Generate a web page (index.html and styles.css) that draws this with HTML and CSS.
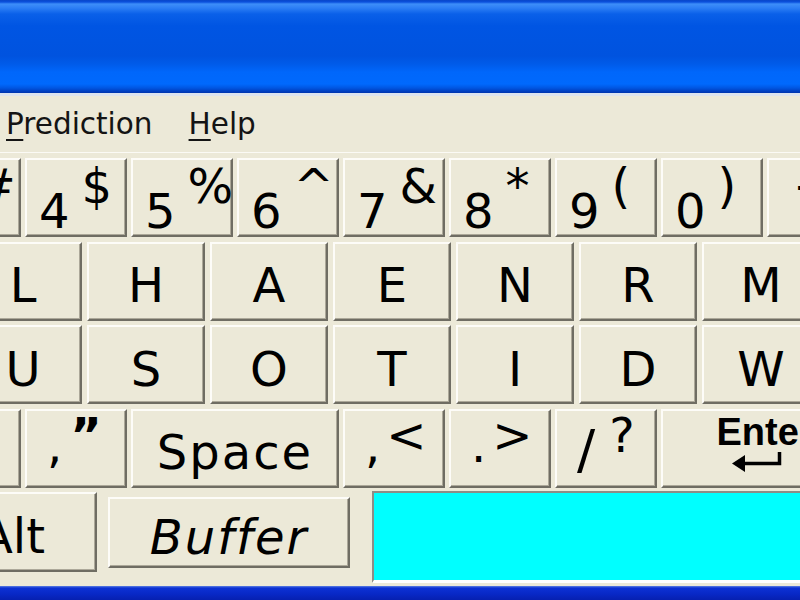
FILE: index.html
```html
<!DOCTYPE html>
<html lang="en">
<head>
  <meta charset="UTF-8">
  <title>On-Screen Keyboard</title>
  <link rel="stylesheet" href="styles.css">
</head>
<body>

<div class="window">
  <div class="titlebar"></div>

  <div class="menubar">
    <span><u>P</u>rediction</span>
    <span><u>H</u>elp</span>
  </div>

  <div class="keyboard">
    <!-- Number row -->
    <div class="row row-num">
      <div class="key pair"><span class="lo">3</span><span class="hi">#</span></div>
      <div class="key pair"><span class="lo">4</span><span class="hi">$</span></div>
      <div class="key pair"><span class="lo">5</span><span class="hi">%</span></div>
      <div class="key pair"><span class="lo">6</span><span class="hi">^</span></div>
      <div class="key pair"><span class="lo">7</span><span class="hi">&amp;</span></div>
      <div class="key pair"><span class="lo">8</span><span class="hi">*</span></div>
      <div class="key pair"><span class="lo">9</span><span class="hi">(</span></div>
      <div class="key pair"><span class="lo">0</span><span class="hi">)</span></div>
      <div class="key pair"><span class="hi">+</span></div>
    </div>

    <!-- Letter rows -->
    <div class="row row-letters">
      <div class="key letter">L</div>
      <div class="key letter">H</div>
      <div class="key letter">A</div>
      <div class="key letter">E</div>
      <div class="key letter">N</div>
      <div class="key letter">R</div>
      <div class="key letter">M</div>
    </div>
    <div class="row row-letters">
      <div class="key letter">U</div>
      <div class="key letter">S</div>
      <div class="key letter">O</div>
      <div class="key letter">T</div>
      <div class="key letter">I</div>
      <div class="key letter">D</div>
      <div class="key letter">W</div>
    </div>

    <!-- Punctuation row -->
    <div class="row row-punct">
      <div class="key"></div>
      <div class="key pair"><span class="lo">,</span><span class="hi quote">”</span></div>
      <div class="key letter wide space">Space</div>
      <div class="key pair"><span class="lo">,</span><span class="hi">&lt;</span></div>
      <div class="key pair"><span class="lo">.</span><span class="hi">&gt;</span></div>
      <div class="key pair"><span class="lo slash">/</span><span class="hi question">?</span></div>
      <div class="key wide enter">
        <span class="enter-label">Enter</span>
        <svg class="enter-arrow" width="50" height="24" viewBox="0 0 50 24">
          <path d="M10 12.5H47.5V1" fill="none" stroke="#000" stroke-width="3.5"/>
          <path d="M0 12.5L13 4V21Z" fill="#000"/>
        </svg>
      </div>
    </div>

    <!-- Bottom row -->
    <div class="row row-bottom">
      <div class="key letter alt">Alt</div>
      <div class="key letter buffer">Buffer</div>
      <div class="field"></div>
    </div>
  </div>

  <div class="frame-bottom"></div>
</div>

</body>
</html>
```

FILE: styles.css
```css
* {
  box-sizing: border-box;
  margin: 0;
  padding: 0;
}

body {
  width: 800px;
  height: 600px;
  overflow: hidden;
  background: #ece9d8;
  font-family: "DejaVu Sans", sans-serif;
  color: #000;
}

.window {
  display: flex;
  flex-direction: column;
  height: 600px;
}

/* Title bar */
.titlebar {
  flex: none;
  height: 96px;
  border-bottom: 3px solid #dce3ef;
  background: linear-gradient(to bottom,
    #0846c9 0px, #0a50dd 2px, #3d8ef9 4px, #2c7ef5 8px, #0a60e9 14px,
    #0055e3 26px, #0053df 56px, #005be9 64px, #0067fb 72px, #0069fd 84px,
    #0056e2 88px, #0040c2 91px, #0034ae 93px);
}

/* Menu */
.menubar {
  flex: none;
  display: flex;
  align-items: center;
  height: 57px;
  padding-left: 6px;
  border-bottom: 1px solid #fbfaf5;
  font-size: 29.5px;
  line-height: 56px;
  color: #141414;
}

.menubar span + span {
  margin-left: 36px;
}

.menubar u {
  text-decoration-thickness: 2px;
  text-underline-offset: 5px;
}

/* Keyboard */
.keyboard {
  flex: 1;
  display: flex;
  flex-direction: column;
  gap: 4.5px;
  padding-top: 5px;
  overflow: hidden;
}

.row {
  flex: none;
  display: flex;
  gap: 4px;
  height: 79px;
}

.row-num, .row-punct {
  margin-left: -81px;
}

.row-letters {
  margin-left: -36px;
  gap: 5px;
}

.row-bottom {
  margin-left: -72px;
  height: 94px;
  align-items: flex-start;
}

.key {
  flex: none;
  width: 102px;
  height: 79px;
  background: #ece9d8;
  border: 2px solid;
  border-color: #fdfcf8 #6f6d63 #6f6d63 #fdfcf8;
  box-shadow: inset -1px -1px 0 #aca899;
  font-size: 48px;
  line-height: 1;
}

.letter {
  width: 118px;
  display: flex;
  justify-content: center;
  align-items: center;
  padding-top: 8px;
}

.wide {
  width: 208px;
}

.space {
  letter-spacing: 2px;
}

/* two-symbol keys: main symbol low-left, shifted one up-right */
.pair {
  display: flex;
  align-items: flex-end;
  padding: 2px 0 0 12px;
}

.pair .hi {
  align-self: flex-start;
  margin-left: 12px;
}

.row-punct .pair {
  padding: 0 0 17px 20px;
}

.row-punct .pair .hi {
  margin-left: 6px;
}

.row-punct .pair .quote {
  margin-left: 8px;
  font-weight: bold;
}

.slash {
  font-size: 54px;
  margin-bottom: -8px;
}

.row-punct .pair .question {
  margin-left: 14px;
}

.enter {
  display: flex;
  flex-direction: column;
  align-items: center;
  padding-top: 2px;
}

.enter-label {
  font-family: "Liberation Sans", Arial, sans-serif;
  font-weight: bold;
  font-size: 38px;
}

.enter-arrow {
  display: block;
  margin-right: 16px;
}

.alt {
  width: 169px;
  height: 80px;
}

.buffer {
  width: 242px;
  height: 71px;
  margin-top: 5px;
  margin-left: 7px;
  font-style: italic;
  letter-spacing: 2px;
}

.field {
  flex: none;
  width: 450px;
  height: 92px;
  margin-top: -1px;
  margin-left: 18px;
  background: #00ffff;
  border-top: 2px solid #8d8d86;
  border-left: 2px solid #8d8d86;
  border-bottom: 3px solid #fff;
}

.frame-bottom {
  flex: none;
  height: 14px;
  background: linear-gradient(to bottom, #5d80e2 0px, #0c31d4 2px, #0828c6 8px, #0620b0 14px);
}
```
